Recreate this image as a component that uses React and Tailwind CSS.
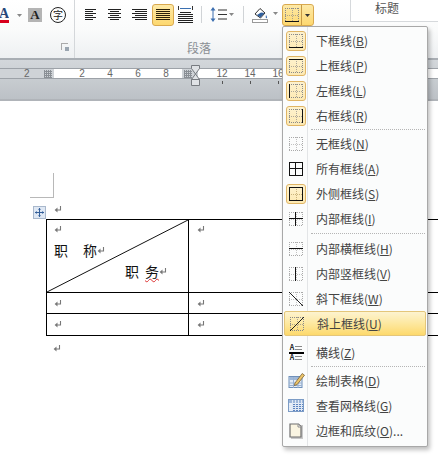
const FONT = { fontFamily: '"Noto Sans CJK SC", sans-serif' };

function Grid({ h = [], v = [], d, dotted = true, size = 14, dot = "#8a8a8a" }) {
  const s = size;
  const dots = [];
  if (dotted) {
    for (let i = 0; i <= s; i += 2) {
      dots.push(<rect key={"t" + i} x={i} y={0} width="1" height="1" fill={dot} />);
      dots.push(<rect key={"b" + i} x={i} y={s - 1} width="1" height="1" fill={dot} />);
      dots.push(<rect key={"l" + i} x={0} y={i} width="1" height="1" fill={dot} />);
      dots.push(<rect key={"r" + i} x={s - 1} y={i} width="1" height="1" fill={dot} />);
      dots.push(<rect key={"m" + i} x={i} y={Math.floor(s / 2)} width="1" height="1" fill={dot} opacity="0.7" />);
      dots.push(<rect key={"n" + i} x={Math.floor(s / 2)} y={i} width="1" height="1" fill={dot} opacity="0.7" />);
    }
  }
  return (
    <svg width={s} height={s} viewBox={`0 0 ${s} ${s}`} shapeRendering="crispEdges">
      {dots}
      {h.map((y) => <rect key={"h" + y} x="0" y={y} width={s} height="1" fill="#111" />)}
      {v.map((x) => <rect key={"v" + x} x={x} y="0" width="1" height={s} fill="#111" />)}
      {d === "down" && <line x1="0" y1="0" x2={s} y2={s} stroke="#222" shapeRendering="auto" />}
      {d === "up" && <line x1="0" y1={s} x2={s} y2="0" stroke="#222" shapeRendering="auto" />}
    </svg>
  );
}

function Frame({ children }) {
  return (
    <div className="w-[20px] h-[20px] flex items-center justify-center rounded-[3px] border border-[#e0b565] bg-gradient-to-b from-[#fdf2cf] to-[#fde9b2]">
      {children}
    </div>
  );
}

function Lines({ kind, w = 11, dark = false }) {
  const widths = {
    left: [w, w - 3, w, w - 3, w, w - 3],
    center: [w, w - 4, w, w - 4, w, w - 4],
    right: [w, w - 3, w, w - 3, w, w - 3],
    full: [w, w, w, w, w, w],
  }[kind];
  return (
    <svg width={w} height="12" viewBox={`0 0 ${w} 12`} shapeRendering="crispEdges">
      {widths.map((l, i) => (
        <rect
          key={i}
          x={kind === "center" ? (w - l) / 2 : kind === "right" ? w - l : 0}
          y={i * 2}
          width={l}
          height="1"
          fill={dark ? "#2a2008" : "#222"}
        />
      ))}
    </svg>
  );
}

function Caret({ color = "#555" }) {
  return (
    <svg width="5" height="3" viewBox="0 0 5 3">
      <path d="M0 0h5L2.5 3z" fill={color} />
    </svg>
  );
}

function Ret({ className = "" }) {
  return (
    <svg width="8" height="9" viewBox="0 0 8 9" className={className}>
      <path d="M6.5 1v4H2" fill="none" stroke="#777" strokeWidth="1.1" />
      <path d="M3.5 2.4 .6 5l2.9 2.6z" fill="#777" />
    </svg>
  );
}

function RulerGrid() {
  return (
    <svg width="8" height="8" viewBox="0 0 8 8" shapeRendering="crispEdges">
      {[0, 2, 4, 6].map((i) => <rect key={"a" + i} x={i} y="0" width="1" height="8" fill="#8a8f95" />)}
      {[1, 3, 5, 7].map((i) => <rect key={"b" + i} x="0" y={i} width="8" height="1" fill="#8a8f95" />)}
    </svg>
  );
}

function DrawTableIcon() {
  return (
    <svg width="17" height="17" viewBox="0 0 17 17">
      <rect x="1" y="4.5" width="13" height="11" fill="#e4ecf6" stroke="#6f90ba" />
      <rect x="1.5" y="5" width="12" height="3" fill="#9fb8d8" />
      <path d="M1 11h13M1 13.5h13M5.5 5v11M10 5v11" stroke="#9ab2d2" />
      <path d="M7 11 14.2 1.5l2.3 1.7L9.2 12.5 6.3 13.6z" fill="#ecc46a" stroke="#6f5426" strokeWidth=".7" />
    </svg>
  );
}

function ViewGridIcon() {
  return (
    <svg width="16" height="13" viewBox="0 0 16 13" shapeRendering="crispEdges">
      <rect x="0.5" y="0.5" width="15" height="12" fill="#e8eff8" stroke="#7c9cc6" />
      <rect x="1" y="1" width="14" height="3" fill="#9db7da" />
      <rect x="4" y="5" width="11" height="7" fill="#5b83bf" />
      {[4, 7, 10, 13].map((x) => <rect key={x} x={x} y="1" width="1" height="11" fill="#dfe8f4" />)}
      {[6, 8, 10].map((y) => <rect key={y} x="1" y={y} width="14" height="1" fill="#dfe8f4" />)}
    </svg>
  );
}

function PageIcon() {
  return (
    <svg width="14" height="16" viewBox="0 0 14 16">
      <rect x="2" y="2" width="12" height="14" fill="#c9c9c9" />
      <path d="M1 1h8.5l2.5 2.5V14H1z" fill="#faf5e2" stroke="#6e6e6e" strokeWidth="1.2" />
      <path d="M9 1.5v2.5h3" fill="#fff" stroke="#8a8a8a" />
    </svg>
  );
}

function HLineIcon() {
  return (
    <div className="flex flex-col items-center" style={{ width: 15 }}>
      <div className="flex items-center gap-[1px] h-[6px]">
        <span className="text-[7px] leading-none text-[#222] font-bold">A</span>
        <span className="w-[7px] h-[4px] border-y border-[#888]" />
      </div>
      <div className="w-[15px] h-[2px] bg-black my-[1px]" />
      <div className="flex items-center gap-[1px] h-[6px]">
        <span className="text-[7px] leading-none text-[#222] font-bold">A</span>
        <span className="w-[7px] h-[4px] border-y border-[#888]" />
      </div>
    </div>
  );
}

function Item({ icon, label, k, suffix = "", active = false, framed = false }) {
  return (
    <div
      className={
        "flex items-center h-[25px] mx-[1px] rounded-[2px] " +
        (active
          ? "bg-gradient-to-b from-[#fdf3cf] via-[#fde89f] to-[#fdd96b] border border-[#e4c67a]"
          : "")
      }
    >
      <div className="w-[24px] flex items-center justify-center shrink-0">
        {framed ? <Frame>{icon}</Frame> : icon}
      </div>
      <div className="pl-[8px] text-[12px] leading-none text-[#444] whitespace-nowrap">
        {label}(<span className="underline">{k}</span>){suffix}
      </div>
    </div>
  );
}

function Sep({ h3 = false, big = false }) {
  return (
    <div className={"ml-[28px] mr-[2px] flex items-center " + (big ? "h-[5px]" : "h-[3px]")}>
      <div className="w-full border-t border-dotted border-[#b5b5b5]" />
    </div>
  );
}

function Menu() {
  return (
    <div
      className="absolute left-[282px] top-[26px] w-[146px] h-[421px] rounded-[2px] border border-[#a8a8a8] bg-[#fbfcfc] shadow-[2px_3px_4px_rgba(0,0,0,0.25)] pt-[1px]"
      style={FONT}
    >
      <div className="absolute left-[24px] top-0 bottom-0 w-px bg-[#e3e5e7]" />
      <div className="relative">
        <Item framed label="下框线" k="B" icon={<Grid h={[13]} />} />
        <Item framed label="上框线" k="P" icon={<Grid h={[0]} />} />
        <Item framed label="左框线" k="L" icon={<Grid v={[0]} />} />
        <Item framed label="右框线" k="R" icon={<Grid v={[13]} />} />
        <Sep />
        <Item label="无框线" k="N" icon={<Grid dot="#aaa" />} />
        <Item label="所有框线" k="A" icon={<Grid dotted={false} h={[0, 6, 13]} v={[0, 6, 13]} />} />
        <Item framed label="外侧框线" k="S" icon={<Grid dot="#b49a5e" h={[0, 13]} v={[0, 13]} />} />
        <Item label="内部框线" k="I" icon={<Grid dot="#aaa" h={[6]} v={[6]} />} />
        <Sep big />
        <Item label="内部横框线" k="H" icon={<Grid dot="#aaa" h={[6]} />} />
        <Item label="内部竖框线" k="V" icon={<Grid dot="#aaa" v={[6]} />} />
        <Item label="斜下框线" k="W" icon={<Grid dot="#aaa" d="down" />} />
        <Item active label="斜上框线" k="U" icon={<Grid d="up" />} />
        <div className="h-[4px]" />
        <Item label="横线" k="Z" icon={<HLineIcon />} />
        <Sep />
        <Item label="绘制表格" k="D" icon={<DrawTableIcon />} />
        <Item label="查看网格线" k="G" icon={<ViewGridIcon />} />
        <Item label="边框和底纹" k="O" suffix="..." icon={<PageIcon />} />
      </div>
    </div>
  );
}

function Ribbon() {
  return (
    <div className="h-[58px] flex bg-gradient-to-b from-[#ffffff] via-[#fafbfb] to-[#eef0f2] shrink-0" style={FONT}>
      <div className="w-[75px] shrink-0 border-r border-[#d4d7da] flex flex-col">
        <div className="h-[31px] flex items-center pb-[1px]">
          <div className="w-[9px] flex flex-col items-end overflow-hidden">
            <span className="text-[14px] leading-[13px] font-bold text-[#26477a]" style={{ fontFamily: '"Liberation Serif", serif' }}>A</span>
            <span className="w-full h-[3px] bg-[#d8001c]" />
          </div>
          <div className="ml-[8px]"><Caret color="#888" /></div>
          <div className="ml-[6px] w-[14px] h-[14px] bg-[#b4b4b4] flex items-center justify-center text-[13px] font-bold text-[#222]" style={{ fontFamily: '"Liberation Serif", serif' }}>A</div>
          <div className="ml-[8px] w-[16px] h-[16px] rounded-full border border-[#222] flex items-center justify-center text-[10px] leading-none text-[#222]">字</div>
        </div>
        <div className="flex-1 flex justify-end items-start pr-[5px] pt-[12px]">
          <svg width="8" height="8" viewBox="0 0 8 8" shapeRendering="crispEdges">
            <path d="M0 0h7M0 0v7" stroke="#aaa" fill="none" />
            <rect x="4" y="4" width="4" height="4" fill="#9aa5b0" />
          </svg>
        </div>
      </div>
      <div className="w-[275px] shrink-0 flex flex-col">
        <div className="h-[30px] flex items-start pt-[4px]">
          <div className="ml-[10px] mt-[5px]"><Lines kind="left" /></div>
          <div className="ml-[12px] mt-[5px]"><Lines kind="center" w={13} /></div>
          <div className="ml-[11px] mt-[5px]"><Lines kind="right" w={15} /></div>
          <div className="ml-[5px] w-[22px] h-[22px] rounded-[3px] border border-[#d9a94f] bg-gradient-to-b from-[#fde9a6] to-[#fdd86f] flex items-center justify-center">
            <Lines kind="full" w={14} dark />
          </div>
          <div className="ml-[4px] mt-[2px] flex flex-col items-center">
            <svg width="15" height="17" viewBox="0 0 15 17" shapeRendering="crispEdges">
              <path d="M0.5 0v4M14.5 0v4" stroke="#333" />
              <path d="M2 2h11" stroke="#3a6fb0" />
              <path d="M2 6h11M0 8h15M0 10h15M0 12h15M0 14h15M0 16h15" stroke="#222" />
            </svg>
          </div>
          <div className="ml-[8px] mt-[2px] w-px h-[17px] bg-[#d0d3d6]" />
          <div className="ml-[8px] mt-[3px] flex items-center gap-[1px]">
            <svg width="17" height="15" viewBox="0 0 17 15">
              <path d="M3 0 .5 3.5h5zM3 15 .5 11.5h5z" fill="#3d6fb0" />
              <path d="M3 3v9" stroke="#3d6fb0" />
              <path d="M8 3h9M8 7.5h9M8 12h9" stroke="#333" />
            </svg>
            <div className="ml-[1px]"><Caret color="#888" /></div>
          </div>
          <div className="ml-[9px] mt-[2px] w-px h-[17px] bg-[#d0d3d6]" />
          <div className="ml-[8px] mt-[3px]">
            <svg width="16" height="16" viewBox="0 0 16 16">
              <path d="M3 7 8 1.5 13 6l-4.5 5z" fill="#fff" stroke="#333" />
              <path d="M5 8 9 5.5 12.5 6 8.5 10.5z" fill="#2f5f9e" />
              <path d="M14 8c1 1.5 1.5 2.5 .7 3.2-.8.3-1.4-.8-.7-3.2z" fill="#3d6fb0" />
              <rect x="0.5" y="12.5" width="15" height="3" fill="#fff" stroke="#999" />
            </svg>
          </div>
          <div className="ml-[5px] mt-[8px]"><Caret color="#888" /></div>
          <div className="ml-[4px] h-[22px] w-[32px] flex rounded-[3px] border border-[#d9a94f] bg-gradient-to-b from-[#fde9a6] to-[#fdd86f]">
            <div className="w-[19px] border-r border-[#c79a45] flex items-center justify-center"><Grid h={[13]} /></div>
            <div className="flex-1 flex items-center justify-center"><Caret color="#333" /></div>
          </div>
        </div>
        <div className="pl-[112px] pt-[11px] text-[12px] leading-[14px] text-[#8b8f94]">段落</div>
      </div>
      <div className="flex-1 h-[22px] border-l border-b border-[#d6d9dc] bg-white pt-[0px] text-[12px] leading-[15px] text-[#555]">
        <span className="block ml-[-7px] w-[86px] text-center">标题</span>
      </div>
    </div>
  );
}

function Ruler() {
  const num = "w-[28px] text-center";
  return (
    <div className="h-[43px] shrink-0 border-t-2 border-[#a9aeb4] border-b-2 border-b-[#b0b4b9] bg-gradient-to-b from-[#d3d7db] to-[#bcc1c6] pt-[8px]" style={{ fontFamily: '"Liberation Sans", sans-serif' }}>
      <div className="relative h-[11px] flex text-[10px] leading-[10px] text-[#666] border-y border-[#9da2a8]">
        <div className="w-[54px] bg-[#cfd3d7] flex items-center pl-[24px] gap-[14px]"><span>2</span><RulerGrid /></div>
        <div className="w-[128px] bg-white flex pl-[14px]">
          <span className={num}>2</span><span className={num}>4</span><span className={num}>6</span><span className={num}>8</span>
        </div>
        <div className="w-[16px] bg-[#cfd3d7] flex items-center pl-[2px]"><RulerGrid /></div>
        <div className="flex-1 bg-white flex pl-[10px]">
          <span className={num}>12</span><span className={num}>14</span><span className={num}>16</span>
        </div>
        <svg className="absolute left-[191px] top-[-4px]" width="9" height="21" viewBox="0 0 9 21">
          <path d="M.5.5h8v3L4.5 9l-4-5.5zM4.5 9l4 5.5h-8zM.5 14.5h8v6h-8z" fill="#dfe2e5" stroke="#777b80" />
        </svg>
      </div>
      <div className="flex pl-[222px] gap-[27px] pt-[2px]">
        <span className="w-px h-[3px] bg-[#555]" />
        <span className="w-px h-[3px] bg-[#555]" />
        <span className="w-px h-[3px] bg-[#555]" />
      </div>
    </div>
  );
}

function Doc() {
  return (
    <div className="flex-1 bg-white overflow-hidden relative" style={FONT}>
      <div className="ml-[30px] mt-[72px] w-[24px] h-[25px] border-r border-b border-[#b8b8b8]" />
      <div className="flex mt-[8px] ml-[33px] h-[13px]">
        <div className="w-[13px] h-[13px] border border-[#a9b8cc] bg-[#dfe8f4] flex items-center justify-center">
          <svg width="9" height="9" viewBox="0 0 9 9">
            <path d="M4.5 0v9M0 4.5h9" stroke="#35609a" />
            <path d="M4.5 0 3 1.8h3zM4.5 9 3 7.2h3zM0 4.5 1.8 3v3zM9 4.5 7.2 3v3z" fill="#35609a" />
          </svg>
        </div>
        <Ret className="ml-[8px] mt-[-1px]" />
      </div>
      <div className="ml-[46px] w-[420px] grid grid-cols-[142px_1fr] border-t border-l border-black">
        <div className="relative h-[73px] border-r border-b border-black pl-[7px] pt-[5px]">
          <Ret />
          <div className="mt-[8px] flex items-center h-[16px] text-[14px] leading-none text-[#111]">
            <span>职</span><span className="ml-[15px]">称</span><Ret />
          </div>
          <div className="mt-[5px] ml-[71px] flex items-center h-[16px] text-[14px] leading-none text-[#111]">
            <span>职</span>
            <span className="ml-[6px] underline decoration-wavy decoration-[#d33] decoration-1">务</span>
            <Ret />
          </div>
          <svg className="absolute inset-0" width="141" height="72" viewBox="0 0 141 72">
            <line x1="0" y1="72" x2="141" y2="0" stroke="#111" />
          </svg>
        </div>
        <div className="h-[73px] border-b border-black pl-[8px] pt-[5px]"><Ret /></div>
        <div className="h-[21px] border-r border-b border-black pl-[7px] flex items-center"><Ret /></div>
        <div className="h-[21px] border-b border-black pl-[8px] flex items-center"><Ret /></div>
        <div className="h-[22px] border-r border-b border-black pl-[7px] flex items-center"><Ret /></div>
        <div className="h-[22px] border-b border-black pl-[8px] flex items-center"><Ret /></div>
      </div>
      <Ret className="ml-[53px] mt-[8px]" />
    </div>
  );
}

export default function App() {
  return (
    <div className="relative w-[438px] h-[460px] overflow-hidden bg-white flex flex-col">
      <Ribbon />
      <Ruler />
      <Doc />
      <Menu />
    </div>
  );
}
